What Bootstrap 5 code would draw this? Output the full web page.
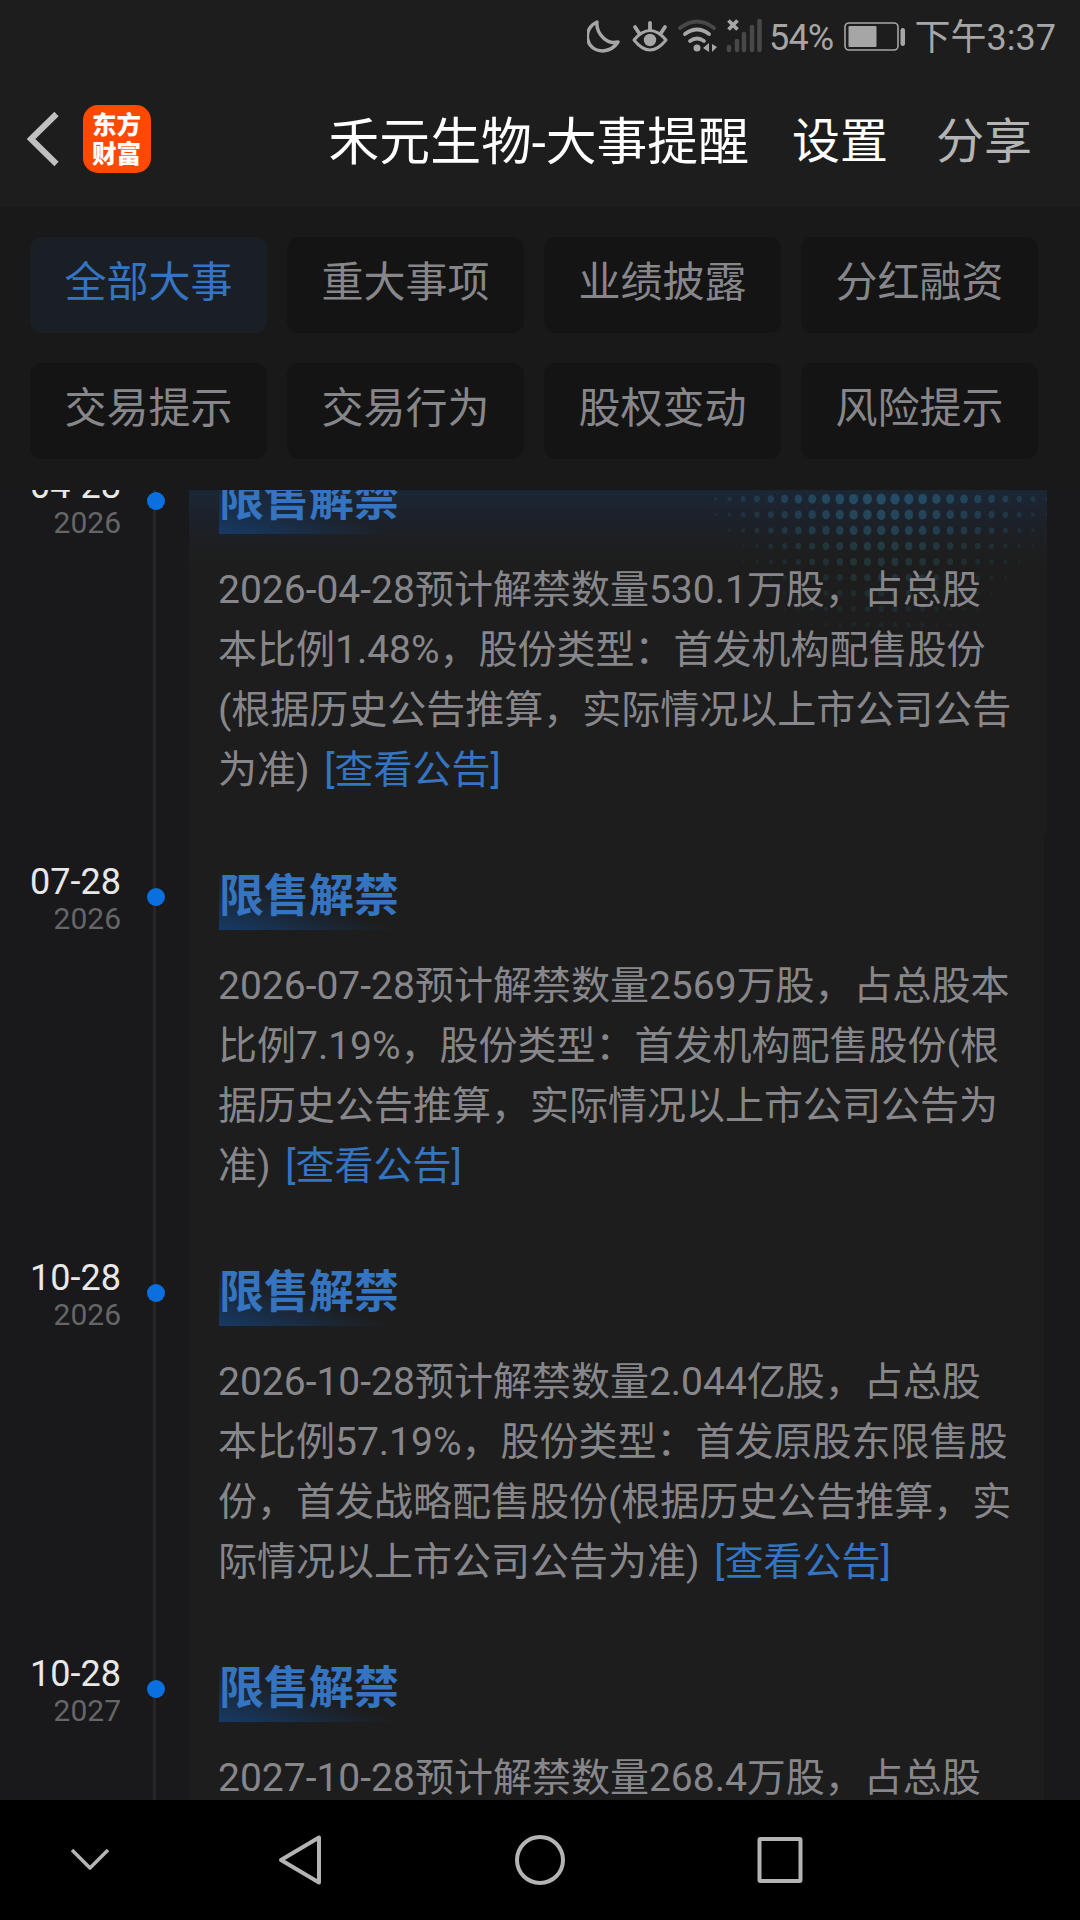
<!DOCTYPE html>
<html lang="zh-CN">
<head>
<meta charset="utf-8">
<meta name="viewport" content="width=device-width, initial-scale=1">
<title>禾元生物-大事提醒</title>
<link href="https://cdn.jsdelivr.net/npm/bootstrap@5.3.0/dist/css/bootstrap.min.css" rel="stylesheet">
<style>
body{width:1080px;height:1920px;overflow:hidden;background:#19191b;color:#87878b;font-family:Roboto,"Noto Sans CJK SC",sans-serif}
.statusbar{height:76px;padding:0 24px 0 587px;font-size:36px;line-height:76px;color:#a6a6a6;background:#1d1d1d}
.statusbar .clock{font-family:Roboto,"Noto Sans CJK SC",sans-serif}
.pct{margin-left:-12px;letter-spacing:-.8px}
.titlebar{height:131px;background:#1d1d1d;color:#fff;font-size:48px;padding:0 48px 0 26px}
.titlebar .heading{font-size:50.8px;line-height:1;padding-top:4px}
.titlebar .action{line-height:1;margin-left:43px;padding-top:1px}
.titlebar .share{margin-left:48px;color:#b4b4b4}
.brandmark{gap:23px;margin-top:-5px}
.applogo{width:68px;height:68px;border-radius:15px;background:#ff4800;color:#fff;font:900 24.5px/29px "Noto Sans CJK SC",sans-serif;padding:4px 0 0 9px}
.filters{height:283px;background:#191919;padding:30px 42px 31px 30px;row-gap:30px;column-gap:20px;display:grid;grid-template-columns:repeat(4,237px);grid-auto-rows:96px}
.chip{background:#141414;border-radius:12px;font-size:42px;line-height:84px;color:#87878b;border:0;padding:0 0 4px;height:96px}
.chip.active{background:#1a1f26;color:#3474c0}
.feed{height:1310px;overflow:hidden}
.feed-inner{margin-top:-52px}
.event{height:396px}
.when{width:121px;padding-top:27px;text-align:right}
.when .day{font-size:36px;line-height:42px;color:#e8e8e8}
.when .yr{font-size:30px;line-height:30px;padding-top:1px;color:#666}
.rail{width:68px;background:linear-gradient(#262626,#262626) 32px 0/3px 100% no-repeat;padding:54px 0 0 26px}
.rail .dot{display:block;width:18px;height:18px;border-radius:50%;background:#0a70df}
.panel{width:855px;background:#1d1d1d;padding:36px 30px 0}
.panel.first{width:858px;background:linear-gradient(#1b2634 0,#1b2634 55px,#1c222b 78px,#1d1f22 102px,#1d1d1d 125px)}
.tagline{display:block;width:180px;height:60px;font-size:45px;line-height:53px;font-weight:700;color:#3474c0;background:linear-gradient(to top right,#163a66 0,rgba(22,58,102,0) 50%)}
.detail{font-size:39px;line-height:60px;margin:26px 0 0 -1px;white-space:nowrap}
.detail a{color:#3474c0;text-decoration:none;margin-left:5px}
.halftone{left:500px;top:0;pointer-events:none}
.navkeys{height:120px;background:#000}
</style>
</head>
<body>
<div class="statusbar d-flex">
<svg width="194" height="76" viewBox="0 0 194 76" fill="none" stroke="#a6a6a6" stroke-linecap="round" stroke-linejoin="round">
<path d="M10 22C-4.500 28-2.500 51 16 51Q26 50 31 42Q22.500 44 16.500 38Q9 31 10 22Z" stroke-width="3.400"/>
<path d="M47 40Q63 21 79 40Q63 60 47 40Z" stroke-width="3"/><circle cx="63" cy="40" r="6.200" fill="#a6a6a6" stroke="none"/><path d="M63 30V23M52 33L48 27M74 33L78 27" stroke-width="3.800"/>
<path d="M93 28Q110 15 127 28" stroke="#484848" stroke-width="4"/><path d="M98 34Q110 25 122 34M103 41Q110 36 117 41" stroke-width="3.800"/><circle cx="110" cy="48" r="3.500" fill="#a6a6a6" stroke="none"/><path d="M122 43V52L116 48ZM125 44V52L130 47Z" fill="#a6a6a6" stroke="none"/>
<path d="M141.500 20.500L150.500 29.500M150.500 20.500L141.500 29.500" stroke-width="3.800" stroke-linecap="butt"/>
<path d="M142 47V50M150 41V50M157 34V50M165 27V50M172.500 21V50" stroke="#484848" stroke-width="4.500"/>
</svg>
<span class="pct">54%</span>
<svg width="66" height="76" viewBox="0 0 66 76" class="ms-2"><rect x="4" y="23" width="53" height="27" rx="4" fill="none" stroke="#a6a6a6" stroke-width="1.600"/><rect x="7.500" y="26" width="28" height="21" rx="1" fill="#a6a6a6"/><rect x="59.500" y="28" width="4.500" height="18" rx="2.200" fill="#a6a6a6"/></svg>
<span class="clock ms-auto">下午3:37</span>
</div>
<header class="titlebar d-flex align-items-center">
<div class="brandmark d-flex align-items-center">
<svg width="34" height="56" viewBox="0 0 34 56" fill="none" stroke="#c0c0c0" stroke-width="6"><path d="M30.500 3L5 28L30.500 53"/></svg>
<div class="applogo">东方<br>财富</div>
</div>
<span class="heading ms-auto">禾元生物-大事提醒</span>
<span class="action">设置</span>
<span class="action share">分享</span>
</header>
<nav class="filters">
<button class="chip active">全部大事</button><button class="chip">重大事项</button><button class="chip">业绩披露</button><button class="chip">分红融资</button>
<button class="chip">交易提示</button><button class="chip">交易行为</button><button class="chip">股权变动</button><button class="chip">风险提示</button>
</nav>
<main class="feed"><div class="feed-inner">
<section class="event d-flex"><div class="when"><div class="day">04-28</div><div class="yr">2026</div></div><div class="rail"><i class="dot"></i></div>
<div class="panel first position-relative"><svg class="halftone position-absolute" width="358" height="240" id="halftone"></svg><div class="position-relative"><span class="tagline">限售解禁</span><p class="detail">2026-04-28预计解禁数量530.1万股，占总股<br>本比例1.48%，股份类型：首发机构配售股份<br>(根据历史公告推算，实际情况以上市公司公告<br>为准) <a href="#">[查看公告]</a></p></div></div></section>
<section class="event d-flex"><div class="when"><div class="day">07-28</div><div class="yr">2026</div></div><div class="rail"><i class="dot"></i></div>
<div class="panel"><span class="tagline">限售解禁</span><p class="detail">2026-07-28预计解禁数量2569万股，占总股本<br>比例7.19%，股份类型：首发机构配售股份(根<br>据历史公告推算，实际情况以上市公司公告为<br>准) <a href="#">[查看公告]</a></p></div></section>
<section class="event d-flex"><div class="when"><div class="day">10-28</div><div class="yr">2026</div></div><div class="rail"><i class="dot"></i></div>
<div class="panel"><span class="tagline">限售解禁</span><p class="detail">2026-10-28预计解禁数量2.044亿股，占总股<br>本比例57.19%，股份类型：首发原股东限售股<br>份，首发战略配售股份(根据历史公告推算，实<br>际情况以上市公司公告为准) <a href="#">[查看公告]</a></p></div></section>
<section class="event d-flex"><div class="when"><div class="day">10-28</div><div class="yr">2027</div></div><div class="rail"><i class="dot"></i></div>
<div class="panel"><span class="tagline">限售解禁</span><p class="detail">2027-10-28预计解禁数量268.4万股，占总股</p></div></section>
</div></main>
<footer class="navkeys">
<svg class="d-block" width="1080" height="120" viewBox="0 0 1080 120" fill="none" stroke="#b4b4b4" stroke-width="4" stroke-linejoin="round"><path d="M72 50L90 68L108 50" stroke-width="3.500"/><path d="M319 37.500V82.500L281 60Z"/><circle cx="540" cy="60" r="23"/><rect x="759.500" y="39" width="41" height="42" rx="1"/></svg>
</footer>
<script src="https://cdn.jsdelivr.net/npm/bootstrap@5.3.0/dist/js/bootstrap.bundle.min.js"></script>
<script>
// Halftone dots shrink and fade away from the top centre.
var dots='';
for(var r=0;r<9;r++)for(var k=-13;k<=11;k++){
 var d=Math.abs(k+0.8)/13,s=Math.max(0,1-d*0.25-d*d*0.68-r*0.08);
 if(s<=0.04)continue;
 dots+='<ellipse cx="'+(206+k*13.8).toFixed(1)+'" cy="'+(61+r*15.7).toFixed(1)+'" rx="'+(1.3+3.4*s).toFixed(2)+'" ry="'+(1.4+4.2*s).toFixed(2)+'" fill="'+(r<3?'#2b6482':'#2a6470')+'" opacity="'+(0.64*(0.15+0.85*s)*(1-r*0.06)).toFixed(2)+'"/>';
}
document.getElementById('halftone').innerHTML=dots;
</script>
</body>
</html>
